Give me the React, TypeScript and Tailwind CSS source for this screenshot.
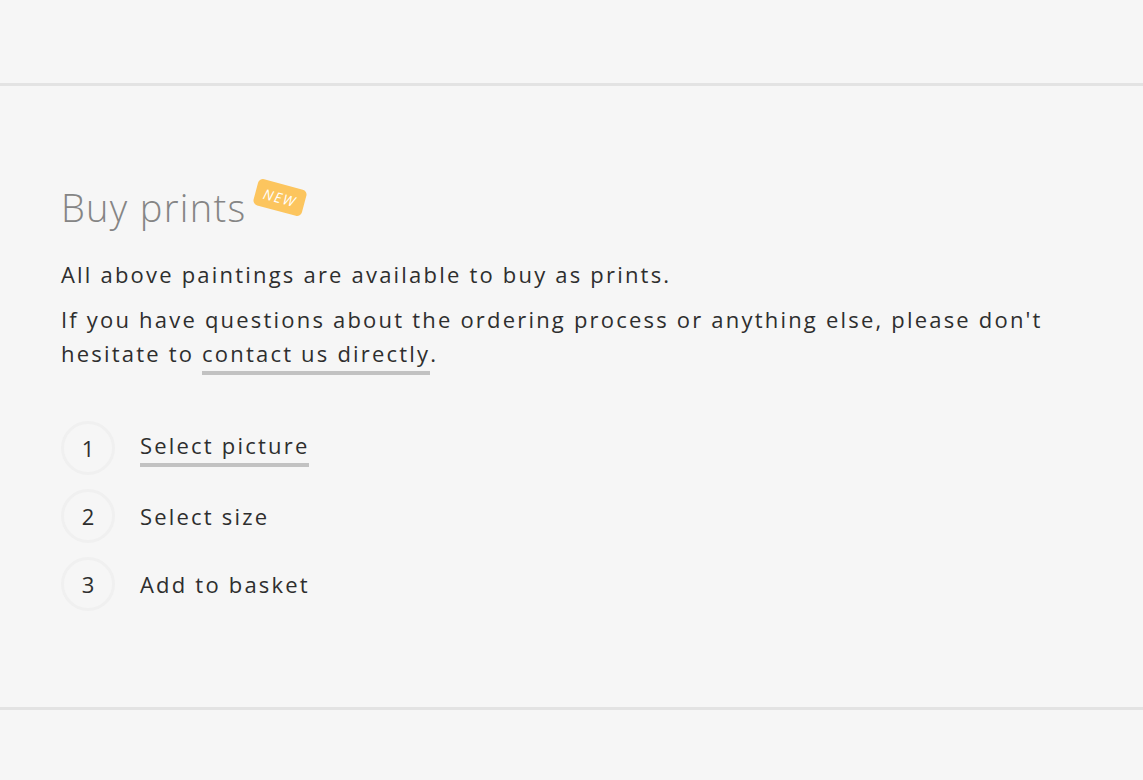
import React from "react";

export default function App() {
  const steps = ["Select picture", "Select size", "Add to basket"];
  return (
    <div className="min-h-[780px] w-full bg-[#f6f6f6]" style={{ fontFamily: "'Open Sans', Lato, sans-serif" }}>
      <div className="h-[83px]" />
      <div className="border-y-[3px] border-[#e3e3e3] px-[61px] pt-[96px] pb-[96px]">
        <div className="flex items-start">
          <h2 className="text-[38px] font-light leading-[50px] tracking-[1.3px] text-[#858585]">Buy prints</h2>
          <span className="ml-[9px] mt-[2px] rotate-[15deg] self-start rounded-[5px] bg-[#fcc55e] px-[8px] py-[5px] text-[14px] italic leading-[17px] tracking-[1.6px] text-white">
            NEW
          </span>
        </div>
        <p className="mt-[25px] text-[22px] font-normal leading-[34px] tracking-[2.2px] text-[#2e2e2e]">
          All above paintings are available to buy as prints.
        </p>
        <p className="mt-[11px] text-[22px] font-normal leading-[34px] tracking-[2.2px] text-[#2e2e2e]">
          If you have questions about the ordering process or anything else, please don't hesitate to{" "}
          <a className="border-b-[4px] border-[#c2c2c2] pb-[3px]">contact us directly</a>.
        </p>
        <ul className="mt-[51px] flex flex-col gap-[14px]">
          {steps.map((s, i) => (
            <li key={s} className="flex items-center">
              <span className="flex h-[54px] w-[54px] items-center justify-center rounded-full border-[3px] border-[#f0f0f0] text-[22px] text-[#2e2e2e]">
                {i + 1}
              </span>
              <span className={`ml-[25px] text-[22px] tracking-[2.2px] text-[#2e2e2e] ${i === 0 ? "border-b-[4px] border-[#c2c2c2] pb-[1px]" : ""}`}>
                {s}
              </span>
            </li>
          ))}
        </ul>
      </div>
    </div>
  );
}
